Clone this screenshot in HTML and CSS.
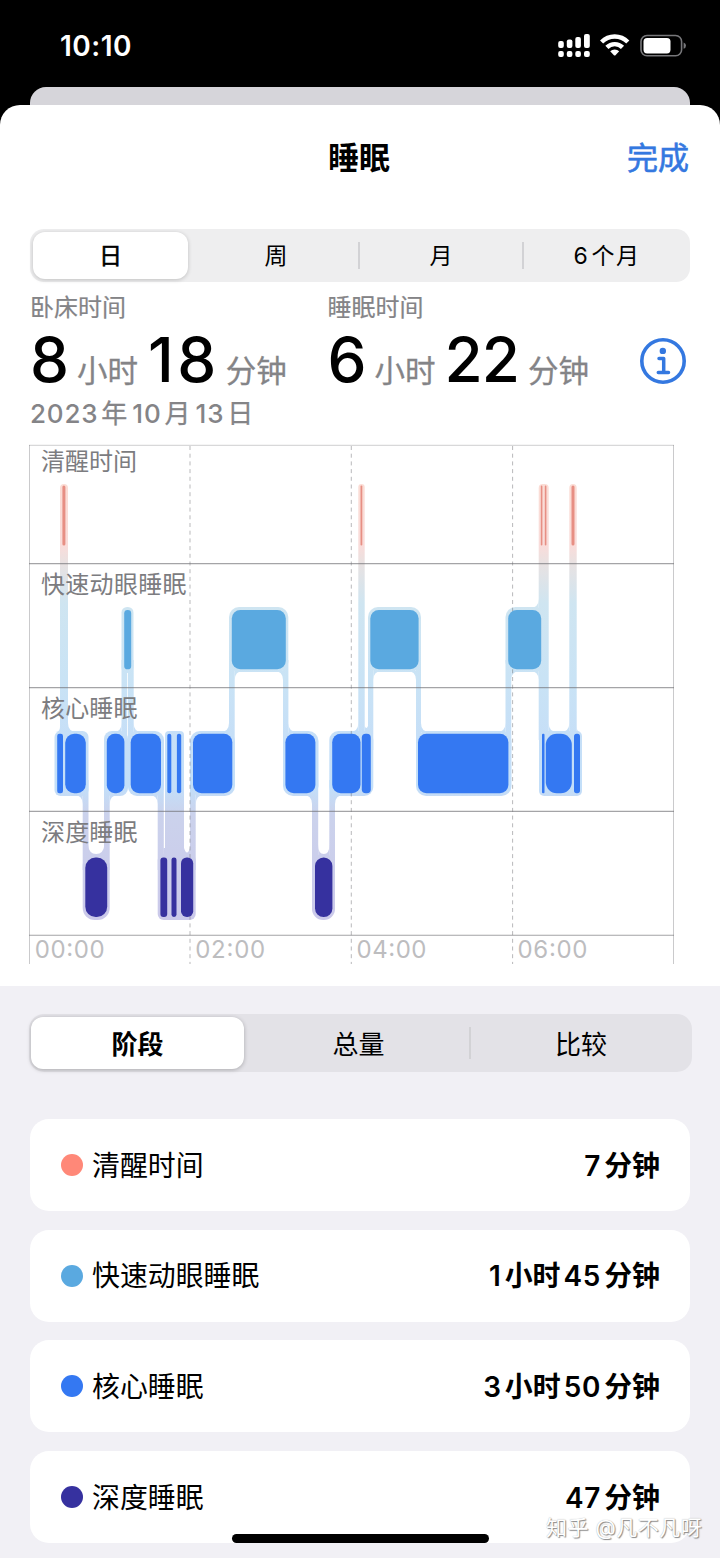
FILE: index.html
```html
<!DOCTYPE html>
<html lang="zh-CN">
<head>
<meta charset="utf-8">
<title>睡眠</title>
<link rel="stylesheet" href="styles.css">
</head>
<body>
<div class="screen">
  <header class="status">
    <span class="clock">10:10</span>
    <svg class="status-icons" width="130" height="26" viewBox="556 33 130 26" fill="#fff">
      <g>
        <rect x="558.2" y="41" width="5.6" height="7" rx="2"/><rect x="566.8" y="39.5" width="5.6" height="8.5" rx="2"/><rect x="575.3" y="37" width="5.6" height="11" rx="2"/><rect x="584" y="34" width="5.8" height="14" rx="2"/>
        <rect x="558.2" y="51" width="5.6" height="6" rx="2"/><rect x="566.8" y="51" width="5.6" height="6" rx="2"/><rect x="575.3" y="51" width="5.6" height="6" rx="2"/><rect x="584" y="51" width="5.8" height="6" rx="2"/>
      </g>
      <g fill="none" stroke="#fff" stroke-width="4.4">
        <path d="M601.6 42a18.4 18.4 0 0 1 26.2 0"/>
        <path d="M606.9 47.4a11 11 0 0 1 15.6 0"/>
      </g>
      <path d="M610.2 51.3a6.4 6.4 0 0 1 9 0l-3.7 3.9q-.8.8-1.6 0z"/>
      <rect x="641" y="35.5" width="40.6" height="20.3" rx="6" fill="none" stroke="#77777a" stroke-width="1.6"/>
      <rect x="643.5" y="38" width="27" height="15.4" rx="3.6"/>
      <path d="M683.6 42.4q2.4.8 2.4 3.2t-2.4 3.2z" fill="#77777a"/>
    </svg>
  </header>
  <div class="back-sheet"></div>
  <main class="sheet">
    <div class="navbar"><h1 class="title">睡眠</h1><span class="done">完成</span></div>
    <nav class="range">
      <span class="range-tab active">日</span><span class="range-tab">周</span><span class="range-tab divided">月</span><span class="range-tab divided half-year"><b class="num">6</b>个月</span>
    </nav>
    <section class="summary">
      <div class="metric bed">
        <div class="label">卧床时间</div>
        <div class="value"><span class="big">8</span><span class="unit">小时</span><span class="big wide">18</span><span class="unit">分钟</span></div>
        <div class="date"><span class="d">2023</span>年<span class="d">10</span>月<span class="d">13</span>日</div>
      </div>
      <div class="metric asleep">
        <div class="label">睡眠时间</div>
        <div class="value"><span class="big">6</span><span class="unit">小时</span><span class="big">22</span><span class="unit">分钟</span></div>
      </div>
      <svg class="info" width="46" height="46" viewBox="0 0 46 46" fill="none" stroke="#3478e0">
        <circle cx="23" cy="23" r="21.2" stroke-width="3.6"/>
        <circle cx="22.8" cy="12.9" r="3.2" fill="#3478e0" stroke="none"/>
        <path d="M19 20.6h4.7v13.6M18.3 34.4h10.2" stroke-width="3.5" stroke-linecap="round" stroke-linejoin="round"/>
      </svg>
    </section>
    <svg class="chart" width="720" height="544" viewBox="0 442 720 544">
      <defs>
        <linearGradient id="halo" gradientUnits="userSpaceOnUse" x1="0" y1="480" x2="0" y2="920">
          <stop offset="0" stop-color="#fbddd5"/><stop offset=".15" stop-color="#f9dcda"/><stop offset=".19" stop-color="#e8e2e2"/><stop offset=".28" stop-color="#cfe5f1"/><stop offset=".45" stop-color="#c9e3f5"/><stop offset=".58" stop-color="#c6dff7"/><stop offset=".7" stop-color="#c3dff9"/><stop offset=".76" stop-color="#cbd2ec"/><stop offset="1" stop-color="#cbc9ea"/>
        </linearGradient>
      </defs>
      <g fill="url(#halo)">
        <!-- halos behind stage blocks -->
        <path d="M60 740V488q0-4 4-4t4 4v252zM358.3 740V487q0-3 3.2-3t3.2 3v253zM538.7 740V488q0-4 4-4h2q4 0 4 4v252zM569.3 740V488q0-4 3.7-4t3.7 4v252z"/>
        <rect x="121.5" y="607" width="12" height="66" rx="5.5"/><rect x="229" y="607" width="59.3" height="65" rx="10"/><rect x="368" y="607" width="53" height="65" rx="10"/><rect x="505.5" y="607" width="40" height="65" rx="10"/>
        <rect x="54.5" y="731" width="34" height="65" rx="6"/><rect x="104" y="731" width="24" height="65" rx="8"/><rect x="128" y="731" width="36" height="65" rx="9"/><rect x="165" y="731" width="19" height="65" rx="4"/><rect x="190" y="731" width="45" height="65" rx="10"/><rect x="283" y="731" width="35.5" height="65" rx="10"/><rect x="329.3" y="731" width="44" height="65" rx="9"/><rect x="416" y="731" width="95.5" height="65" rx="10"/><rect x="539" y="731" width="43" height="65" rx="5"/>
        <rect x="82.7" y="854" width="27" height="66" rx="12"/><rect x="157.7" y="854" width="38" height="66" rx="6"/><rect x="312" y="854" width="23" height="66" rx="11"/>
        <!-- transitions between stages -->
        <path d="M82.7 780h5.8v90h-5.8zM104 780h5.7v90h-5.7zM121.5 660h5.7v85h-5.7zM128 660h5.7v85H128zM157.7 780h6.1v90h-6.1zM165 780h19v80h-19zM190 780h5.7v90H190zM229 660h5.7v90H229zM283 660h5.4v90H283zM312 780h6.2v90H312zM329.3 780h5.7v90h-5.7zM368 660h5.3v90H368zM416 660h5v90h-5zM505.5 660h5.8v90h-5.8z"/>
        <path d="M60 732h-5q5 0 5-5zM68 732h9q-9 0-9-9zM121.5 732h-8q8 0 8-9zM133.7 732h8q-8 0-8-9zM229 732h-9q9 0 9-9zM288.4 732h9q-9 0-9-9zM358.3 732h-9q9 0 9-9zM364.7 732v-6q1.6 4 3.3 0v6zM421 732h9q-9 0-9-9zM505.5 732h-9q9 0 9-9zM548.7 732h9q-9 0-9-9zM569.3 732h-9q9 0 9-9zM576.7 732h4q-4 0-4-5z"/>
        <path d="M82.7 795h-9q9 0 9 9zM109.7 795h9q-9 0-9 9zM157.7 795h-9q9 0 9 9zM195.7 795h9q-9 0-9 9zM312 795h-9q9 0 9 9zM335 795h9q-9 0-9 9z"/>
        <path d="M234.7 671h9q-9 0-9 9zM283 671h-9q9 0 9 9zM373.3 671h9q-9 0-9 9zM416 671h-9q9 0 9 9zM511.3 671h9q-9 0-9 9zM538.7 671h-9q9 0 9 9zM538.7 608h-9q9 0 9-9z"/>
        <path d="M88 857v-12q1 9 8.2 9t8.2-9v12zM184 857v-9q3 9 6 0v9zM318.2 857v-12q0 9 5.6 9t5.6-9v12zM163.5 857v-9h2v9z"/>
      </g>
      <g fill="none" stroke="#737378" stroke-opacity=".65">
        <path d="M29 445.3h645" stroke-opacity=".35"/>
        <path d="M29.5 445v519M673.5 445v519" stroke-opacity=".38"/>
        <path d="M29 563.6h645M29 687.6h645M29 811.4h645M29 935.3h645" stroke-width="1.1"/>
        <path d="M190 446v518M351.3 446v518M512.6 446v518" stroke-dasharray="4 3.7" stroke-opacity=".5"/>
      </g>
      <g fill="#e78f84">
        <rect x="62.4" y="485.6" width="3" height="60" rx="1.5"/><rect x="360.5" y="485.6" width="1.8" height="60" rx=".8"/><rect x="540.8" y="485.6" width="1.6" height="60" rx=".8"/><rect x="544.8" y="485.6" width="1.6" height="60" rx=".8"/><rect x="571.5" y="485.6" width="3" height="60" rx="1.5"/>
      </g>
      <g fill="#5aa9e0">
        <rect x="124.2" y="610" width="7" height="59.3" rx="3.4"/><rect x="231.8" y="610" width="54" height="59.3" rx="8.5"/><rect x="370.3" y="610" width="48.3" height="59.3" rx="8.5"/><rect x="508.2" y="610" width="33" height="59.3" rx="8.5"/>
      </g>
      <g fill="#3478f2">
        <rect x="57.2" y="733.8" width="5.8" height="59.4" rx="2.2"/><rect x="65.2" y="733.8" width="20.6" height="59.4" rx="9"/><rect x="106.8" y="733.8" width="17.6" height="59.4" rx="8"/><rect x="130.7" y="733.8" width="30.3" height="59.4" rx="8.5"/><rect x="167.3" y="733.8" width="4" height="59.4" rx="2"/><rect x="176.9" y="733.8" width="4.3" height="59.4" rx="2"/><rect x="193" y="733.8" width="39.3" height="59.4" rx="8.5"/><rect x="285.4" y="733.8" width="30" height="59.4" rx="8.5"/><rect x="332.2" y="733.8" width="28.3" height="59.4" rx="8.5"/><rect x="361.8" y="733.8" width="9" height="59.4" rx="4"/><rect x="418" y="733.8" width="90.4" height="59.4" rx="8.5"/><rect x="542" y="733.8" width="2.5" height="59.4" rx="1"/><rect x="545.8" y="733.8" width="26" height="59.4" rx="11"/><rect x="574" y="733.8" width="6" height="59.4" rx="2.6"/>
      </g>
      <g fill="#36319f">
        <rect x="85.3" y="857.4" width="21.9" height="59.6" rx="10.3"/><rect x="160.4" y="857.4" width="6.8" height="59.6" rx="3"/><rect x="171.5" y="857.4" width="5" height="59.6" rx="2.4"/><rect x="181" y="857.4" width="12.2" height="59.6" rx="5.8"/><rect x="315" y="857.4" width="17.4" height="59.6" rx="8.6"/>
      </g>
      <g class="stage-name">
        <text x="41" y="469.8" textLength="96">清醒时间</text><text x="41" y="593.3" textLength="145.5">快速动眼睡眠</text><text x="41" y="716.8" textLength="96.5">核心睡眠</text><text x="41" y="840.8" textLength="96.5">深度睡眠</text>
      </g>
      <g class="hour">
        <text x="34.7" y="958.3" textLength="70">00:00</text><text x="195.2" y="958.3" textLength="70">02:00</text><text x="356.5" y="958.3" textLength="70">04:00</text><text x="517.5" y="958.3" textLength="70">06:00</text>
      </g>
    </svg>
  </main>
  <section class="details">
    <nav class="modes"><span class="mode active">阶段</span><span class="mode">总量</span><span class="mode divided">比较</span></nav>
    <ul class="stages">
      <li class="stage"><i class="dot awake"></i><span class="name">清醒时间</span><span class="amount"><b>7</b>分钟</span></li>
      <li class="stage"><i class="dot rem"></i><span class="name">快速动眼睡眠</span><span class="amount"><b>1</b>小时<b>45</b>分钟</span></li>
      <li class="stage"><i class="dot core"></i><span class="name">核心睡眠</span><span class="amount"><b>3</b>小时<b>50</b>分钟</span></li>
      <li class="stage"><i class="dot deep"></i><span class="name">深度睡眠</span><span class="amount"><b>47</b>分钟</span></li>
    </ul>
  </section>
  <div class="home-bar"></div>
  <div class="watermark">知乎 @凡不凡呀</div>
</div>
</body>
</html>
```
FILE: styles.css
```css
* { box-sizing: border-box; }
body { margin: 0; background: #000; font-family: Inter, "Noto Sans CJK SC", sans-serif; color: #000; }
.screen { position: relative; display: flex; flex-direction: column; width: 720px; height: 1558px; overflow: hidden; background: #000; }
.status { height: 87px; flex: none; display: flex; justify-content: space-between; padding: 33px 34px 0 60px; color: #fff; }
.clock { font-size: 28px; line-height: 27px; font-weight: 600; letter-spacing: .5px; }
.back-sheet { height: 18px; flex: none; margin: 0 30px; background: #d6d5da; border-radius: 16px 16px 0 0; }
.sheet { flex: none; height: 881px; background: #fff; border-radius: 20px 20px 0 0; display: flex; flex-direction: column; }
.navbar { height: 124px; flex: none; display: grid; grid-template-columns: 1fr auto 1fr; align-items: start; padding: 31px 31px 0 29px; line-height: 44px; }
.title { grid-column: 2; margin: 0; font-size: 31px; font-weight: 700; line-height: 44px; }
.done { justify-self: end; font-size: 31px; color: #3478e0; -webkit-text-stroke: .6px #3478e0; }
.range { flex: none; height: 53px; margin: 0 30px; padding: 3px; display: grid; grid-template-columns: 155px 170px 164px 1fr; background: #eeeeef; border-radius: 14px; }
.range-tab { position: relative; display: flex; align-items: center; justify-content: center; font-size: 23px; line-height: 30px; padding-top: 1px; }
.range-tab:nth-child(2) { padding-left: 6px; }
.range-tab:nth-child(3) { padding-left: 2px; }
.range-tab.active { background: #fff; border-radius: 12px; box-shadow: 0 1px 4px rgba(0,0,0,.2); -webkit-text-stroke: .6px #000; }
.divided::before { content: ""; position: absolute; left: 0; top: 10px; bottom: 10px; width: 2px; background: #d2d2d5; }
.half-year { letter-spacing: 1.5px; padding-left: 5px; }
.num { font-weight: 400; margin-right: 2px; }
.summary { flex: none; height: 160px; display: flex; padding: 8px 34px 0 30px; color: #848487; }
.metric { width: 297.5px; flex: none; white-space: nowrap; }
.label { font-size: 24px; line-height: 36px; -webkit-text-stroke: .2px #848487; }
.value { display: flex; align-items: baseline; height: 67px; line-height: 67px; }
.big { color: #000; font-size: 62px; font-weight: 500; letter-spacing: -1px; }
.wide { letter-spacing: 3.5px; margin: 0 -3px 0 1px; }
.unit { font-size: 30.5px; margin: 0 9px; -webkit-text-stroke: .3px #848487; }
.date { font-size: 26px; line-height: 42px; -webkit-text-stroke: .3px #848487; }
.d { font-size: 26px; font-weight: 500; letter-spacing: .8px; -webkit-text-stroke: 0; margin: 0 3px 0 5px; }
.d:first-child { margin-left: 0; }
.info { margin: 48px 0 0 auto; flex: none; }
.chart { flex: none; display: block; }
.stage-name { font: 24px "Noto Sans CJK SC", sans-serif; fill: #7c7c80; }
.hour { font: 24px Inter, sans-serif; fill: #bdbdbf; }
.details { flex: 1; background: #f1f0f5; padding: 28px 28px 0 29px; }
.modes { height: 58px; padding: 3px 0 3px 2px; display: grid; grid-template-columns: 213px 225px 1fr; background: #e3e2e7; border-radius: 15px; }
.mode { position: relative; display: flex; align-items: center; justify-content: center; font-size: 26px; line-height: 36px; padding: 3px 0 0 4px; }
.mode.divided { padding-left: 1px; }
.mode.active { padding: 3px 0 0; background: #fff; border-radius: 12px; font-weight: 700; box-shadow: 0 1px 4px rgba(0,0,0,.25); }
.stages { list-style: none; margin: 47px 2px 0 1px; padding: 0; display: grid; gap: 18.7px; }
.stage { height: 92px; background: #fff; border-radius: 19px; padding: 0 30px 0 31px; display: flex; align-items: center; font-size: 27.9px; line-height: 40px; }
.name { padding-top: 1px; }
.dot { width: 22px; height: 22px; border-radius: 50%; margin-right: 9px; }
.awake { background: #ff8878; }
.rem { background: #5aa9e0; }
.core { background: #3478f2; }
.deep { background: #36319f; }
.amount { margin-left: auto; padding-top: 1px; font-weight: 700; }
.amount b { font-weight: 600; margin: 0 3px; letter-spacing: .8px; }
.home-bar { position: absolute; left: 232px; top: 1534px; width: 257px; height: 9px; border-radius: 5px; background: #000; }
.watermark { position: absolute; left: 546px; top: 1513px; font-size: 21px; line-height: 30px; letter-spacing: .5px; color: #fff; text-shadow: 1px 1px 1px #888, 0 0 1px #aaa; white-space: nowrap; }
```
